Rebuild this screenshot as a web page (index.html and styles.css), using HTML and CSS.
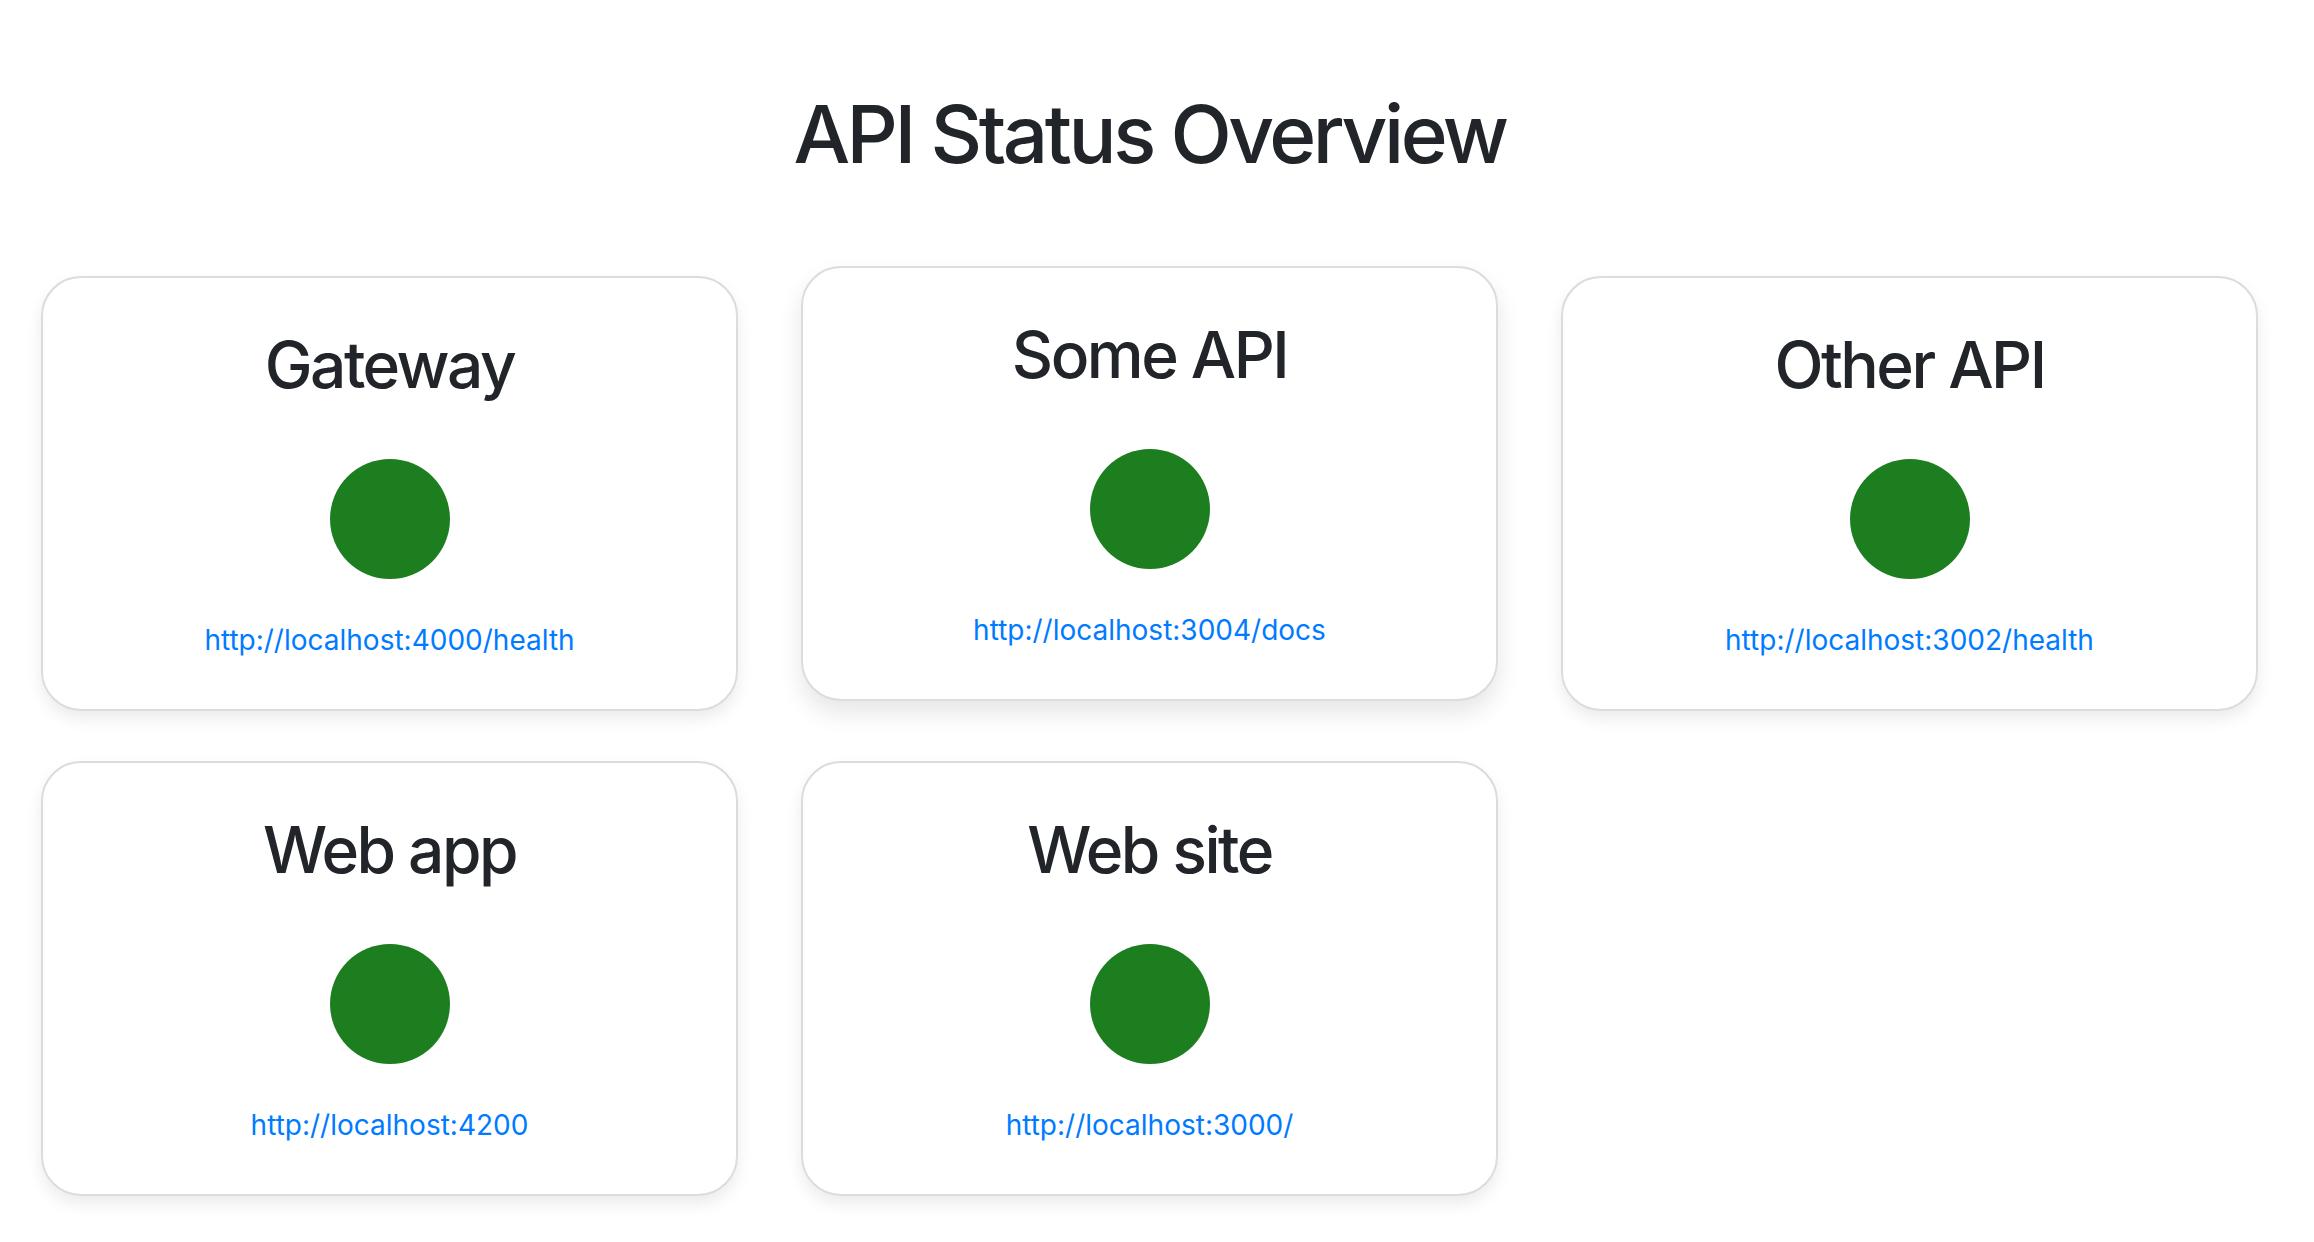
FILE: index.html
```html
<!DOCTYPE html>
<html lang="en">
<head>
<meta charset="utf-8">
<title>API Status Overview</title>
<link rel="stylesheet" href="styles.css">
</head>
<body>
<main class="page">
  <h1 class="title">API Status Overview</h1>
  <section class="grid">
    <div class="card">
      <h2 class="card-title">Gateway</h2>
      <div class="dot"></div>
      <a class="link" href="#">http://localhost:4000/health</a>
    </div>
    <div class="card card-raised">
      <h2 class="card-title">Some API</h2>
      <div class="dot"></div>
      <a class="link" href="#">http://localhost:3004/docs</a>
    </div>
    <div class="card">
      <h2 class="card-title">Other API</h2>
      <div class="dot"></div>
      <a class="link" href="#">http://localhost:3002/health</a>
    </div>
    <div class="card">
      <h2 class="card-title">Web app</h2>
      <div class="dot"></div>
      <a class="link" href="#">http://localhost:4200</a>
    </div>
    <div class="card">
      <h2 class="card-title">Web site</h2>
      <div class="dot"></div>
      <a class="link" href="#">http://localhost:3000/</a>
    </div>
  </section>
</main>
</body>
</html>
```

FILE: styles.css
```css
* { box-sizing: border-box; }

html, body {
  margin: 0;
  padding: 0;
  background: #ffffff;
}

body {
  font-family: Inter, "Noto Sans", "Liberation Sans", sans-serif;
  color: #212529;
}

.page {
  padding: 86px 56px 40px 41px;
}

.title {
  margin: 0 0 94px 0;
  font-size: 80px;
  font-weight: 500;
  line-height: 96px;
  text-align: center;
  letter-spacing: -3.5px;
}

.grid {
  display: grid;
  grid-template-columns: repeat(3, 1fr);
  column-gap: 63px;
  row-gap: 50px;
}

.card {
  display: flex;
  flex-direction: column;
  align-items: center;
  border: 2px solid #dcdcdc;
  border-radius: 40px;
  padding: 48px;
  background: #fff;
  box-shadow: 0 8px 16px rgba(0, 0, 0, 0.08);
}

.card-raised {
  transform: translateY(-10px);
  box-shadow: 0 12px 24px rgba(0, 0, 0, 0.1);
}

.card-title {
  margin: 0 0 16px 0;
  font-size: 64px;
  font-weight: 500;
  line-height: 77px;
  letter-spacing: -2.5px;
}

.dot {
  width: 120px;
  height: 120px;
  border-radius: 50%;
  background: #1c7e1f;
  margin: 40px 0;
}

.link {
  font-size: 28px;
  line-height: 42px;
  color: #007bff;
  text-decoration: none;
}
```
